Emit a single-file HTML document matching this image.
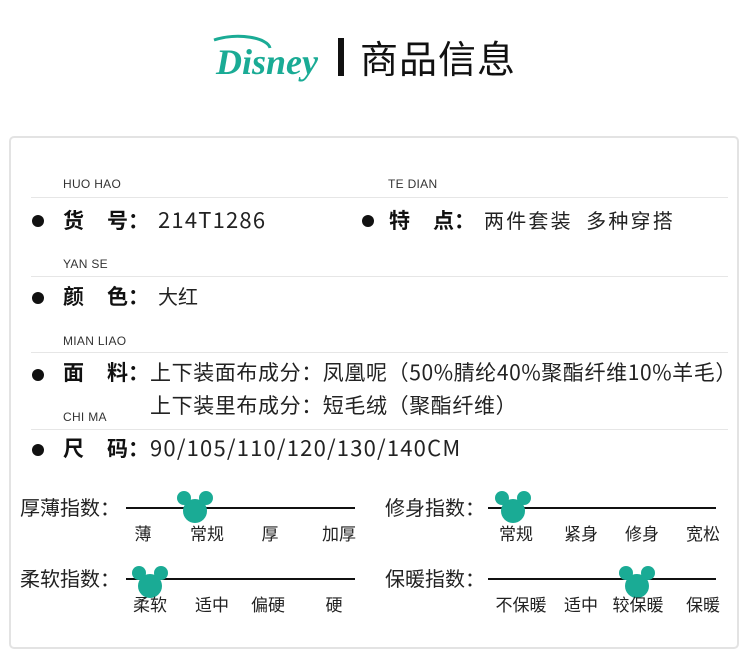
<!DOCTYPE html>
<html><head><meta charset="utf-8"><style>
*{margin:0;padding:0;box-sizing:border-box}
body{width:750px;height:659px;background:#fff;position:relative;overflow:hidden;font-family:"Liberation Sans","Noto Sans CJK SC",sans-serif;color:#222}
.a{position:absolute;white-space:nowrap;line-height:1.2}
.card{position:absolute;left:9px;top:136px;width:730px;height:513px;border:2px solid #e3e3e3;border-radius:5px}
.hl{position:absolute;height:1px;background:#e6e6e6}
.lab{font-size:12px;color:#333;letter-spacing:.3px}
.dot{width:12px;height:12px;border-radius:50%;background:#111}
.b{font-size:21px;font-weight:bold;color:#111;font-family:"Noto Sans CJK SC",sans-serif}
.v{font-size:20px;color:#222;font-family:"Noto Sans CJK SC",sans-serif;font-weight:400}
.t{font-size:20px;color:#222;font-family:"Noto Sans CJK SC",sans-serif;font-weight:400}
.ln{position:absolute;height:2px;background:#111}
.s{font-size:17px;color:#222;transform:translateX(-50%);font-family:"Noto Sans CJK SC",sans-serif;font-weight:400}
.m{position:absolute;width:36px;height:34px}
</style></head><body>
<svg class="a" style="left:208px;top:30px" width="125" height="56" viewBox="0 0 125 56">
<path d="M6 10 C30 2,60 8,62 18" stroke="#1aab95" stroke-width="3" fill="none"/>
<text x="8" y="44" font-family="Liberation Serif,serif" font-style="italic" font-weight="bold" font-size="36" fill="#1aab95">Disney</text>
</svg>
<div class="a" style="left:338px;top:38px;width:6px;height:38px;background:#111"></div>
<div class="a" style="left:360px;top:34px;font-size:38px;color:#111;letter-spacing:1px;font-family:'Noto Sans CJK SC',sans-serif;font-weight:400">商品信息</div>
<div class="card"></div>

<div class="a lab" style="left:63px;top:177px">HUO HAO</div>
<div class="a lab" style="left:388px;top:177px">TE DIAN</div>
<div class="hl" style="left:31px;top:197px;width:697px"></div>
<div class="a dot" style="left:32px;top:215px"></div>
<div class="a b" style="left:63px;top:208px">货</div>
<div class="a b" style="left:107px;top:208px">号：</div>
<div class="a v" style="left:158px;top:206px;font-size:22px;letter-spacing:1.2px">214T1286</div>
<div class="a dot" style="left:362px;top:215px"></div>
<div class="a b" style="left:389px;top:208px">特</div>
<div class="a b" style="left:433px;top:208px">点：</div>
<div class="a v" style="left:484px;top:208px;letter-spacing:2.2px">两件套装&nbsp; 多种穿搭</div>

<div class="a lab" style="left:63px;top:257px">YAN SE</div>
<div class="hl" style="left:31px;top:276px;width:697px"></div>
<div class="a dot" style="left:32px;top:292px"></div>
<div class="a b" style="left:63px;top:284px">颜</div>
<div class="a b" style="left:107px;top:284px">色：</div>
<div class="a v" style="left:158px;top:284px">大红</div>

<div class="a lab" style="left:63px;top:334px">MIAN LIAO</div>
<div class="hl" style="left:31px;top:352px;width:697px"></div>
<div class="a dot" style="left:32px;top:369px"></div>
<div class="a b" style="left:63px;top:360px">面</div>
<div class="a b" style="left:107px;top:360px">料：</div>
<div class="a v" style="left:150px;top:360px;font-size:21px;letter-spacing:.6px">上下装面布成分：凤凰呢（50%腈纶40%聚酯纤维10%羊毛）</div>
<div class="a v" style="left:150px;top:393px;font-size:21px;letter-spacing:.6px">上下装里布成分：短毛绒（聚酯纤维）</div>
<div class="a lab" style="left:63px;top:410px">CHI MA</div>
<div class="hl" style="left:31px;top:429px;width:697px"></div>
<div class="a dot" style="left:32px;top:444px"></div>
<div class="a b" style="left:63px;top:436px">尺</div>
<div class="a b" style="left:107px;top:436px">码：</div>
<div class="a v" style="left:150px;top:434px;font-size:22px;letter-spacing:1.2px">90/105/110/120/130/140CM</div>

<svg width="0" height="0" style="position:absolute"><defs><g id="mk" fill="#1aab95"><circle cx="18" cy="21" r="12"/><circle cx="7" cy="8" r="7"/><circle cx="29" cy="8" r="7"/></g></defs></svg>

<div class="a t" style="left:20px;top:495px">厚薄指数：</div>
<div class="ln" style="left:126px;top:507px;width:229px"></div>
<svg class="m" style="left:177px;top:490px"><use href="#mk"/></svg>
<div class="a s" style="left:143px;top:523px">薄</div>
<div class="a s" style="left:207px;top:523px">常规</div>
<div class="a s" style="left:270px;top:523px">厚</div>
<div class="a s" style="left:339px;top:523px">加厚</div>

<div class="a t" style="left:20px;top:566px">柔软指数：</div>
<div class="ln" style="left:126px;top:578px;width:229px"></div>
<svg class="m" style="left:132px;top:565px"><use href="#mk"/></svg>
<div class="a s" style="left:150px;top:594px">柔软</div>
<div class="a s" style="left:212px;top:594px">适中</div>
<div class="a s" style="left:268px;top:594px">偏硬</div>
<div class="a s" style="left:334px;top:594px">硬</div>

<div class="a t" style="left:385px;top:495px">修身指数：</div>
<div class="ln" style="left:488px;top:507px;width:228px"></div>
<svg class="m" style="left:495px;top:490px"><use href="#mk"/></svg>
<div class="a s" style="left:516px;top:523px">常规</div>
<div class="a s" style="left:581px;top:523px">紧身</div>
<div class="a s" style="left:642px;top:523px">修身</div>
<div class="a s" style="left:703px;top:523px">宽松</div>

<div class="a t" style="left:385px;top:566px">保暖指数：</div>
<div class="ln" style="left:488px;top:578px;width:228px"></div>
<svg class="m" style="left:619px;top:565px"><use href="#mk"/></svg>
<div class="a s" style="left:521px;top:594px">不保暖</div>
<div class="a s" style="left:581px;top:594px">适中</div>
<div class="a s" style="left:638px;top:594px">较保暖</div>
<div class="a s" style="left:703px;top:594px">保暖</div>
</body></html>
